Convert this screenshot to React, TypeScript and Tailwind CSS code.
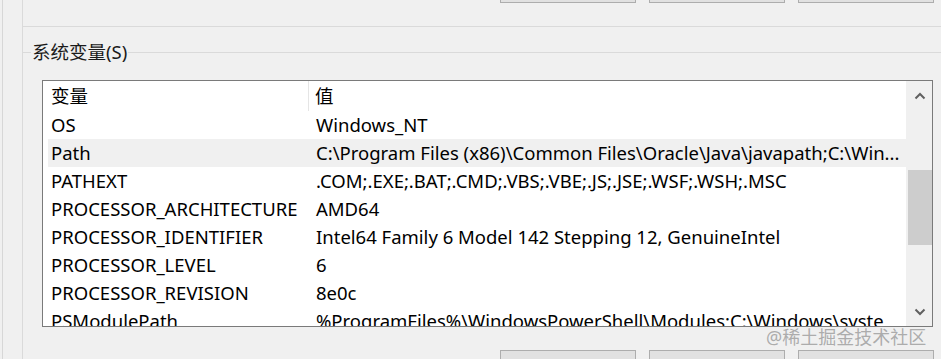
import React from 'react'

const rows: [string, string][] = [
  ['OS', 'Windows_NT'],
  ['Path', 'C:\\Program Files (x86)\\Common Files\\Oracle\\Java\\javapath;C:\\Win...'],
  ['PATHEXT', '.COM;.EXE;.BAT;.CMD;.VBS;.VBE;.JS;.JSE;.WSF;.WSH;.MSC'],
  ['PROCESSOR_ARCHITECTURE', 'AMD64'],
  ['PROCESSOR_IDENTIFIER', 'Intel64 Family 6 Model 142 Stepping 12, GenuineIntel'],
  ['PROCESSOR_LEVEL', '6'],
  ['PROCESSOR_REVISION', '8e0c'],
  ['PSModulePath', '%ProgramFiles%\\WindowsPowerShell\\Modules;C:\\Windows\\syste'],
]

function Chevron({ up }: { up?: boolean }) {
  return (
    <svg width="12" height="8" viewBox="0 0 12 8" className="text-[#606060]">
      <path
        d={up ? 'M1.5 6.5 L6 2 L10.5 6.5' : 'M1.5 1.5 L6 6 L10.5 1.5'}
        fill="none"
        stroke="currentColor"
        strokeWidth="2"
      />
    </svg>
  )
}

function DlgButtons({ className }: { className: string }) {
  return (
    <div className={`flex gap-[13px] pl-[477px] ${className}`}>
      <div className="h-[30px] w-[136px] shrink-0 border border-[#adadad] bg-[#e1e1e1]" />
      <div className="h-[30px] w-[136px] shrink-0 border border-[#adadad] bg-[#e1e1e1]" />
      <div className="h-[30px] w-[136px] shrink-0 border border-[#adadad] bg-[#e1e1e1]" />
    </div>
  )
}

export default function App() {
  return (
    <div
      className="relative h-[359px] w-[941px] overflow-hidden bg-[#f0f0f0] text-black"
      style={{ fontFamily: '"Noto Sans", "Noto Sans CJK SC", sans-serif' }}
    >
      <div className="flex h-full">
        <div className="w-[2px] shrink-0" />
        <div className="w-[1px] shrink-0 bg-[#d7d7d7]" />
        <div className="w-[19px] shrink-0" />
        <div className="flex-1 border-l border-[#dadada]">
          <div className="flex h-[27px] flex-col border-b border-[#dadada]">
            <DlgButtons className="-mt-[27px]" />
          </div>

          <fieldset className="mt-[14px] border-t border-[#dadada] pl-[19px]">
            <legend className="-ml-[11px] px-[1px] text-[18.5px] leading-[22px] text-[#1a1a1a]">系统变量(S)</legend>

            <div className="mt-[17px] flex h-[247px] w-[891px] border border-[#7a7a7a] bg-white">
              <div className="min-w-0 flex-1 overflow-hidden text-[18.5px] leading-[28px]">
                <div className="flex h-[30px] items-center">
                  <div className="h-full w-[266px] shrink-0 border-r border-[#e5e5e5] pl-[8px] leading-[30px]">变量</div>
                  <div className="pl-[6px] leading-[30px]">值</div>
                </div>
                {rows.map(([name, value]) => (
                  <div
                    key={name}
                    className={`ml-[5px] flex h-[28px] whitespace-nowrap ${name === 'Path' ? 'bg-[#f0f0f0]' : ''}`}
                  >
                    <div className="w-[261px] shrink-0 pl-[3px]">{name}</div>
                    <div className="pl-[7px]">{value}</div>
                  </div>
                ))}
              </div>
              <div className="flex w-[26px] shrink-0 flex-col items-center border-l border-[#f0f0f0] bg-[#f0f0f0]">
                <div className="flex h-[30px] items-center justify-center">
                  <Chevron up />
                </div>
                <div className="mt-[59px] h-[75px] w-[24px] bg-[#cdcdcd]" />
                <div className="flex-1" />
                <div className="flex h-[28px] items-center justify-center">
                  <Chevron />
                </div>
              </div>
            </div>

            <DlgButtons className="mt-[23px] -ml-[19px]" />
          </fieldset>
        </div>
      </div>

      <div className="absolute left-[766px] top-[325px] text-[18px] leading-[24px] text-[#9a9a9a]/80">
        @稀土掘金技术社区
      </div>
    </div>
  )
}
